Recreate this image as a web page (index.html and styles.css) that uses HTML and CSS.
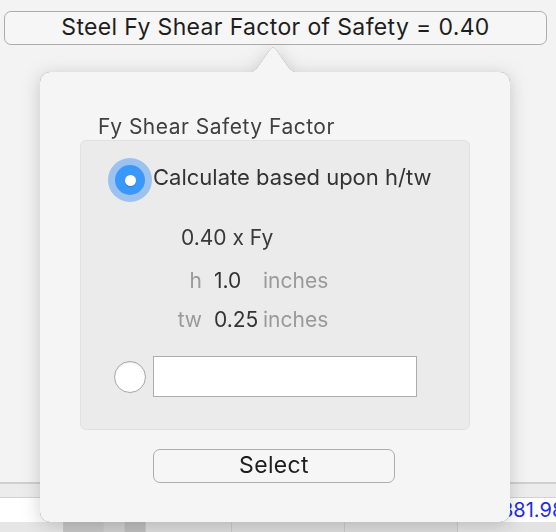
FILE: index.html
```html
<!DOCTYPE html>
<html>
<head>
<meta charset="utf-8">
<link rel="stylesheet" href="styles.css">
</head>
<body>
<div class="window">
  <div class="top-area">
    <div class="title-btn">Steel Fy Shear Factor of Safety = 0.40</div>
  </div>
  <div class="table-area">
    <div class="table-head"></div>
    <div class="table-row"><span class="cell-value">381.98</span></div>
    <div class="table-foot">
      <span class="foot-cell c1"></span><span class="foot-cell c2"></span><span class="foot-cell c3"></span><span class="foot-cell c4"></span><span class="foot-cell c5"></span><span class="foot-cell c6"></span><span class="foot-cell c7"></span>
    </div>
  </div>
</div>

<div class="popover">
  <svg class="arrow" width="56" height="27" viewBox="0 0 56 27"><path d="M0 27 C6 27 9 25 12 22 L25.5 3 Q28 0 30.5 3 L44 22 C47 25 50 27 56 27 Z" fill="#f5f5f5"/></svg>
  <div class="group-label">Fy Shear Safety Factor</div>
  <div class="group-box">
    <div class="radio-row">
      <span class="radio radio-on"></span>
      <span class="radio-text">Calculate based upon h/tw</span>
    </div>
    <div class="formula">0.40 x Fy</div>
    <div class="dims">
      <span class="dim-label">h</span><span class="dim-value">1.0</span><span class="dim-unit">inches</span>
      <span class="dim-label">tw</span><span class="dim-value">0.25</span><span class="dim-unit">inches</span>
    </div>
    <div class="custom-row">
      <span class="radio radio-off"></span>
      <span class="text-field"></span>
    </div>
  </div>
  <div class="select-btn">Select</div>
</div>
</body>
</html>
```
FILE: styles.css
```css
html, body {
  margin: 0;
  padding: 0;
}
body {
  width: 556px;
  height: 532px;
  overflow: hidden;
  background: #f3f3f3;
  font-family: Inter, "Liberation Sans", sans-serif;
  position: relative;
}
.window {
  display: flex;
  flex-direction: column;
  height: 532px;
}
.top-area {
  height: 484px;
  border-bottom: 2px solid #cfcfcf;
  box-sizing: border-box;
  padding: 11px 0 0 4px;
}
.title-btn {
  width: 543px;
  height: 34px;
  box-sizing: border-box;
  border: 1.5px solid #acacac;
  border-radius: 7px;
  background: #f6f6f6;
  font-size: 23px;
  letter-spacing: 0.35px;
  line-height: 31px;
  text-align: center;
  color: #1e1e1e;
}
.table-area {
  flex: 1;
  display: flex;
  flex-direction: column;
  background: linear-gradient(90deg, #d9d9d9 0px, #ffffff 30px);
}
.table-head {
  height: 13px;
  background: #ececec;
  border-bottom: 1px solid #d2d2d2;
}
.table-row {
  height: 24px;
  background: #fff;
  position: relative;
  overflow: hidden;
  white-space: nowrap;
}
.cell-value {
  display: block;
  margin-left: 501px;
  font-size: 20px;
  line-height: 24px;
  color: #1f2bf0;
}
.table-foot {
  flex: 1;
  display: flex;
  background: #e3e3e3;
}
.foot-cell {
  display: block;
  height: 100%;
  border-right: 1px solid #c9c9c9;
  box-sizing: border-box;
}
.c1 { width: 64px; background: #e6e6e6; }
.c2 { width: 40px; background: #c6c6c6; }
.c3 { width: 21px; background: #cfcfcf; }
.c4 { width: 21px; background: #bdbdbd; }
.c5 { width: 86px; background: #dcdcdc; }
.c6 { width: 113px; background: #dcdcdc; }
.c7 { width: 113px; background: #dcdcdc; }

.popover {
  position: absolute;
  left: 40px;
  top: 72px;
  width: 470px;
  height: 450px;
  background: #f5f5f5;
  border-radius: 10px;
  display: flex;
  flex-direction: column;
  filter: drop-shadow(0 0 0.6px rgba(0, 0, 0, 0.55)) drop-shadow(0 3px 9px rgba(0, 0, 0, 0.18));
}
.arrow {
  position: absolute;
  left: 205px;
  top: -26px;
  display: block;
}
.group-label {
  margin: 42px 0 0 58px;
  font-size: 21px;
  letter-spacing: 0.5px;
  line-height: 25px;
  color: #404040;
}
.group-box {
  margin: 1px 0 0 40px;
  width: 390px;
  height: 290px;
  box-sizing: border-box;
  background: #ebebeb;
  border: 1px solid #e1e1e1;
  border-radius: 6px;
  display: flex;
  flex-direction: column;
}
.radio-row {
  display: flex;
  align-items: flex-start;
  margin: 24px 0 0 34px;
  gap: 8px;
}
.radio {
  display: block;
  border-radius: 50%;
  box-sizing: border-box;
  flex: none;
}
.radio-on {
  width: 30px;
  height: 30px;
  background: #3b98fb;
  box-shadow: 0 0 0 7px rgba(60, 145, 245, 0.45);
  position: relative;
}
.radio-on::after {
  content: "";
  position: absolute;
  left: 9.5px;
  top: 9.5px;
  width: 11px;
  height: 11px;
  border-radius: 50%;
  background: #fff;
  box-shadow: 0 1px 1px rgba(0, 0, 0, 0.2);
}
.radio-text {
  margin-top: -1px;
  font-size: 22px;
  line-height: 26px;
  color: #333;
}
.formula {
  margin: 30px 0 0 100px;
  font-size: 21px;
  line-height: 26px;
  color: #383838;
}
.dims {
  display: grid;
  grid-template-columns: 44px 59px auto;
  row-gap: 13px;
  margin: 17px 0 0 79px;
  font-size: 21px;
  line-height: 26px;
}
.dim-label {
  text-align: right;
  padding-right: 2px;
  color: #9a9a9a;
}
.dim-value {
  padding-left: 10px;
  color: #333;
}
.dim-unit {
  color: #9a9a9a;
}
.custom-row {
  display: flex;
  align-items: center;
  gap: 7px;
  margin: 23px 0 0 33px;
}
.radio-off {
  width: 32px;
  height: 32px;
  background: #fff;
  border: 1px solid #a8a8a8;
  box-shadow: inset 0 1px 2px rgba(0, 0, 0, 0.08);
}
.text-field {
  display: block;
  width: 264px;
  height: 41px;
  box-sizing: border-box;
  border: 1.5px solid #adadad;
  background: #fff;
}
.select-btn {
  margin: 19px 0 0 113px;
  width: 242px;
  height: 34px;
  box-sizing: border-box;
  border: 1.5px solid #acacac;
  border-radius: 7px;
  background: #f6f6f6;
  font-size: 23px;
  letter-spacing: 0.35px;
  line-height: 31px;
  text-align: center;
  color: #1e1e1e;
}
```
